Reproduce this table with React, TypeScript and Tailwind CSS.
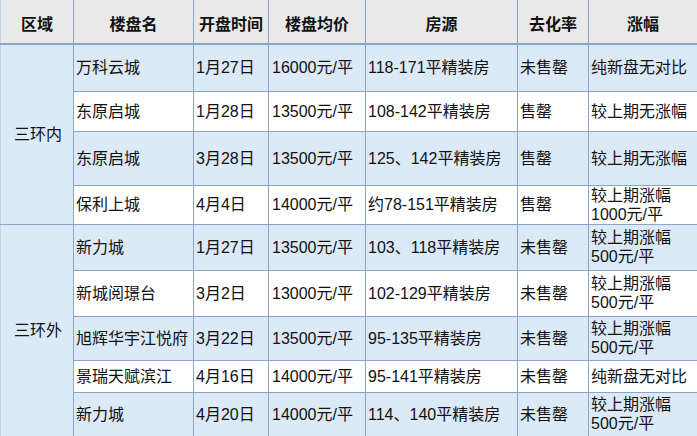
import React from 'react';

interface Row {
  name: string;
  date: string;
  price: string;
  source: string;
  sold: string;
  rise: string[];
  h: string;
}

const inner: Row[] = [
  { name: '万科云城', date: '1月27日', price: '16000元/平', source: '118-171平精装房', sold: '未售罄', rise: ['纯新盘无对比'], h: 'h-[47px]' },
  { name: '东原启城', date: '1月28日', price: '13500元/平', source: '108-142平精装房', sold: '售罄', rise: ['较上期无涨幅'], h: 'h-[40px]' },
  { name: '东原启城', date: '3月28日', price: '13500元/平', source: '125、142平精装房', sold: '售罄', rise: ['较上期无涨幅'], h: 'h-[54px]' },
  { name: '保利上城', date: '4月4日', price: '14000元/平', source: '约78-151平精装房', sold: '售罄', rise: ['较上期涨幅', '1000元/平'], h: 'h-[38px]' },
];

const outer: Row[] = [
  { name: '新力城', date: '1月27日', price: '13500元/平', source: '103、118平精装房', sold: '未售罄', rise: ['较上期涨幅', '500元/平'], h: 'h-[46px]' },
  { name: '新城阅璟台', date: '3月2日', price: '13000元/平', source: '102-129平精装房', sold: '未售罄', rise: ['较上期涨幅', '500元/平'], h: 'h-[46px]' },
  { name: '旭辉华宇江悦府', date: '3月22日', price: '13500元/平', source: '95-135平精装房', sold: '未售罄', rise: ['较上期涨幅', '500元/平'], h: 'h-[44px]' },
  { name: '景瑞天赋滨江', date: '4月16日', price: '14000元/平', source: '95-141平精装房', sold: '未售罄', rise: ['纯新盘无对比'], h: 'h-[32px]' },
  { name: '新力城', date: '4月20日', price: '14000元/平', source: '114、140平精装房', sold: '未售罄', rise: ['较上期涨幅', '500元/平'], h: 'h-[44px]' },
];

const headers = ['区域', '楼盘名', '开盘时间', '楼盘均价', '房源', '去化率', '涨幅'];

const cell = 'border border-[#8ba5c9] pl-[2px] pr-0 align-middle whitespace-nowrap';

function DataRow({ row, index, region, span }: { row: Row; index: number; region?: string; span?: number }) {
  const bg = index % 2 === 0 ? 'bg-[#dce9f7]' : 'bg-white';
  return (
    <tr className={`${row.h} ${bg}`}>
      {region && (
        <td rowSpan={span} className={`${cell} border-l-[#c3d3e8] bg-[#dce9f7] text-center pl-0`}>
          {region}
        </td>
      )}
      <td className={cell}>{row.name}</td>
      <td className={cell}>{row.date}</td>
      <td className={`${cell} pl-[3px]`}>{row.price}</td>
      <td className={cell}>{row.source}</td>
      <td className={cell}>{row.sold}</td>
      <td className={`${cell} leading-[19px]`}>
        {row.rise.map((line, i) => (
          <div key={i}>{line}</div>
        ))}
      </td>
    </tr>
  );
}

export default function App() {
  return (
    <div className="w-[697px] h-[436px] overflow-hidden bg-white text-[#111] font-['Liberation_Sans','Noto_Sans_CJK_SC',sans-serif] text-[16px] leading-[19px]">
      <table className="w-[697px] table-fixed border-collapse">
        <colgroup>
          <col className="w-[73px]" />
          <col className="w-[120px]" />
          <col className="w-[75px]" />
          <col className="w-[97px]" />
          <col className="w-[152px]" />
          <col className="w-[71px]" />
          <col className="w-[109px]" />
        </colgroup>
        <thead>
          <tr className="h-[44px] bg-[#e9e9e9]">
            {headers.map((h, i) => (
              <th
                key={h}
                className={`border border-t-0 border-[#8ba5c9] border-b-2 font-bold text-center align-middle pt-[6px] ${i === 0 ? 'border-l-[#c3d3e8]' : ''}`}
              >
                {h}
              </th>
            ))}
          </tr>
        </thead>
        <tbody>
          {inner.map((row, i) => (
            <DataRow key={`in-${i}`} row={row} index={i} region={i === 0 ? '三环内' : undefined} span={inner.length} />
          ))}
          {outer.map((row, i) => (
            <DataRow key={`out-${i}`} row={row} index={i} region={i === 0 ? '三环外' : undefined} span={outer.length} />
          ))}
        </tbody>
      </table>
    </div>
  );
}
